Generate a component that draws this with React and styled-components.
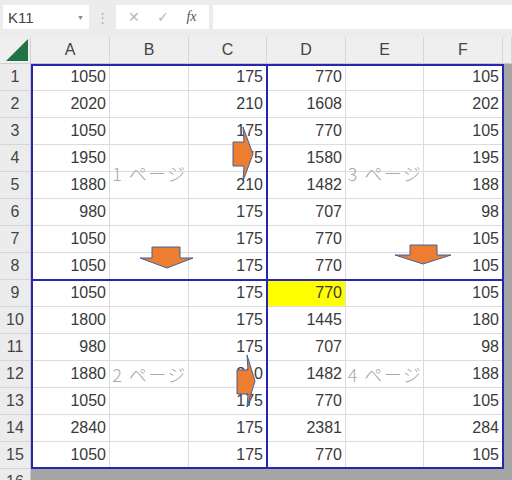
import React from 'react';
import styled, { createGlobalStyle } from 'styled-components';

const GlobalStyle = createGlobalStyle`
  html, body {
    margin: 0;
    padding: 0;
    background: #a5a5a5;
    overflow: hidden;
  }
  body {
    font-family: 'Liberation Sans', Arial, sans-serif;
  }
`;

const COLS = ['A', 'B', 'C', 'D', 'E', 'F'];

// A, C, D, F hold values; B and E stay empty
const DATA = [
  [1050, 175, 770, 105],
  [2020, 210, 1608, 202],
  [1050, 175, 770, 105],
  [1950, 175, 1580, 195],
  [1880, 210, 1482, 188],
  [980, 175, 707, 98],
  [1050, 175, 770, 105],
  [1050, 175, 770, 105],
  [1050, 175, 770, 105],
  [1800, 175, 1445, 180],
  [980, 175, 707, 98],
  [1880, 210, 1482, 188],
  [1050, 175, 770, 105],
  [2840, 175, 2381, 284],
  [1050, 175, 770, 105],
];

const Wrapper = styled.div`
  width: 512px;
  height: 480px;
  overflow: hidden;
  background: #a5a5a5;
`;

const TopBar = styled.div`
  height: 37px;
  box-sizing: border-box;
  background: #ececec;
  display: flex;
  align-items: flex-start;
  padding: 5px 0 0 3px;
`;

const NameBox = styled.div`
  width: 86px;
  height: 24px;
  background: #fff;
  display: flex;
  align-items: center;
  justify-content: space-between;
  padding: 0 5px;
  box-sizing: border-box;
  font-size: 15px;
  color: #444;
`;

const Caret = styled.span`
  font-size: 7px;
  color: #888;
`;

const Dots = styled.div`
  width: 27px;
  height: 24px;
  display: flex;
  align-items: center;
  justify-content: center;
  color: #b0b0b0;
  font-size: 13px;
`;

const FxBox = styled.div`
  width: 93px;
  height: 24px;
  background: #fff;
  display: flex;
  align-items: center;
  justify-content: space-around;
  padding: 0 4px;
  box-sizing: border-box;
  color: #b8b8b8;
  font-size: 14px;
`;

const Fx = styled.span`
  font-family: 'Liberation Serif', 'Times New Roman', serif;
  font-style: italic;
  color: #555;
  font-size: 14px;
`;

const FormulaInput = styled.div`
  flex: 1;
  height: 24px;
  margin-left: 4px;
  background: #fff;
`;

const Sheet = styled.div`
  position: relative;
  display: grid;
  grid-template-columns: 31px 79px 79px 78px 79px 78px 79px 1fr;
  grid-auto-rows: 27px;
`;

const Corner = styled.div`
  background: #efefef;
  border-right: 1px solid #d0d0d0;
  border-bottom: 1px solid #d0d0d0;
  box-sizing: border-box;
  display: flex;
  align-items: flex-end;
  justify-content: flex-end;
  padding: 0 2px 2px 0;
`;

const ColHead = styled.div`
  background: #efefef;
  border-right: 1px solid #d6d6d6;
  border-bottom: 1px solid #c8c8c8;
  box-sizing: border-box;
  display: flex;
  align-items: center;
  justify-content: center;
  font-size: 16px;
  color: #444;
`;

const RowHead = styled.div`
  background: #ececec;
  border-bottom: 1px solid #d6d6d6;
  border-right: 1px solid #c8c8c8;
  box-sizing: border-box;
  display: flex;
  align-items: center;
  justify-content: center;
  font-size: 16px;
  color: #444;
`;

const Cell = styled.div`
  background: ${(p) => (p.$yellow ? '#ffff00' : '#fff')};
  border-right: 1px solid #dcdcdc;
  border-bottom: 1px solid #dcdcdc;
  box-sizing: border-box;
  display: flex;
  align-items: center;
  justify-content: flex-end;
  padding-right: 3px;
  font-size: 16px;
  color: #3a3a3a;
`;

const Outside = styled.div`
  background: #a5a5a5;
`;

const PrintArea = styled.div`
  position: absolute;
  left: 31px;
  top: 27px;
  width: 473px;
  height: 405px;
  box-sizing: border-box;
  border: 2px solid #2626b0;
  display: grid;
  grid-template-columns: 235px 1fr;
  grid-template-rows: 215px 1fr;
  pointer-events: none;
`;

const Page = styled.div`
  position: relative;
  border-right: ${(p) => (p.$left ? '2px solid #2626b0' : 'none')};
  border-bottom: ${(p) => (p.$top ? '2px solid #2626b0' : 'none')};
  display: flex;
  align-items: center;
  justify-content: center;
`;

const PageLabel = styled.span`
  font-family: 'Noto Sans CJK JP', 'Noto Sans', sans-serif;
  font-size: 18px;
  letter-spacing: 1.5px;
  color: #a9a9a9;
  font-weight: 300;
  white-space: nowrap;
`;

const Shape = styled.svg`
  position: absolute;
  overflow: visible;
`;

const ARROW_FILL = '#ed7d31';
const ARROW_LINE = '#41619c';

const RightArrow = ({ left, top, tip = 22, bottom = 56 }) => (
  <Shape width={tip} height={bottom} style={{ left, top }}>
    <polygon
      points={`2,16 13,16 12,1 ${tip},${Math.round(bottom / 2)} 12,${bottom - 1} 13,40 2,40`}
      fill={ARROW_FILL}
      stroke={ARROW_LINE}
      strokeWidth="1"
    />
  </Shape>
);

const DownArrow = ({ left, top, shaft, head, width, height }) => (
  <Shape width={width} height={height} style={{ left, top }}>
    <polygon
      points={`${shaft[0]},0 ${shaft[1]},0 ${shaft[1]},${head} ${width},${head} ${Math.round(width / 2)},${height} 0,${head} ${shaft[0]},${head}`}
      fill={ARROW_FILL}
      stroke={ARROW_LINE}
      strokeWidth="1"
    />
  </Shape>
);

const Triangle = () => (
  <svg width="22" height="22" viewBox="0 0 22 22">
    <polygon points="0,22 22,22 22,0" fill="#217346" />
  </svg>
);

export default function App() {
  return (
    <Wrapper>
      <GlobalStyle />
      <TopBar>
        <NameBox>
          K11
          <Caret>▼</Caret>
        </NameBox>
        <Dots>⋮</Dots>
        <FxBox>
          <span>✕</span>
          <span>✓</span>
          <Fx>fx</Fx>
        </FxBox>
        <FormulaInput />
      </TopBar>

      <Sheet>
        <Corner>
          <Triangle />
        </Corner>
        {COLS.map((c) => (
          <ColHead key={c}>{c}</ColHead>
        ))}
        <ColHead />

        {DATA.map((row, i) => (
          <React.Fragment key={i}>
            <RowHead>{i + 1}</RowHead>
            <Cell>{row[0]}</Cell>
            <Cell />
            <Cell>{row[1]}</Cell>
            <Cell $yellow={i === 8}>{row[2]}</Cell>
            <Cell />
            <Cell>{row[3]}</Cell>
            <Outside />
          </React.Fragment>
        ))}

        <RowHead>16</RowHead>
        <Outside style={{ gridColumn: '2 / -1' }} />

        <PrintArea>
          <Page $left $top>
            <PageLabel>1 ページ</PageLabel>
            <RightArrow left={198} top={60} tip={22} bottom={56} />
            <DownArrow left={107} top={181} shaft={[12, 40]} head={11} width={53} height={21} />
          </Page>
          <Page $top>
            <PageLabel>3 ページ</PageLabel>
            <DownArrow left={127} top={179} shaft={[15, 42]} head={10} width={56} height={19} />
          </Page>
          <Page $left>
            <PageLabel>2 ページ</PageLabel>
            <RightArrow left={202} top={73} tip={20} bottom={54} />
          </Page>
          <Page>
            <PageLabel>4 ページ</PageLabel>
          </Page>
        </PrintArea>
      </Sheet>
    </Wrapper>
  );
}
